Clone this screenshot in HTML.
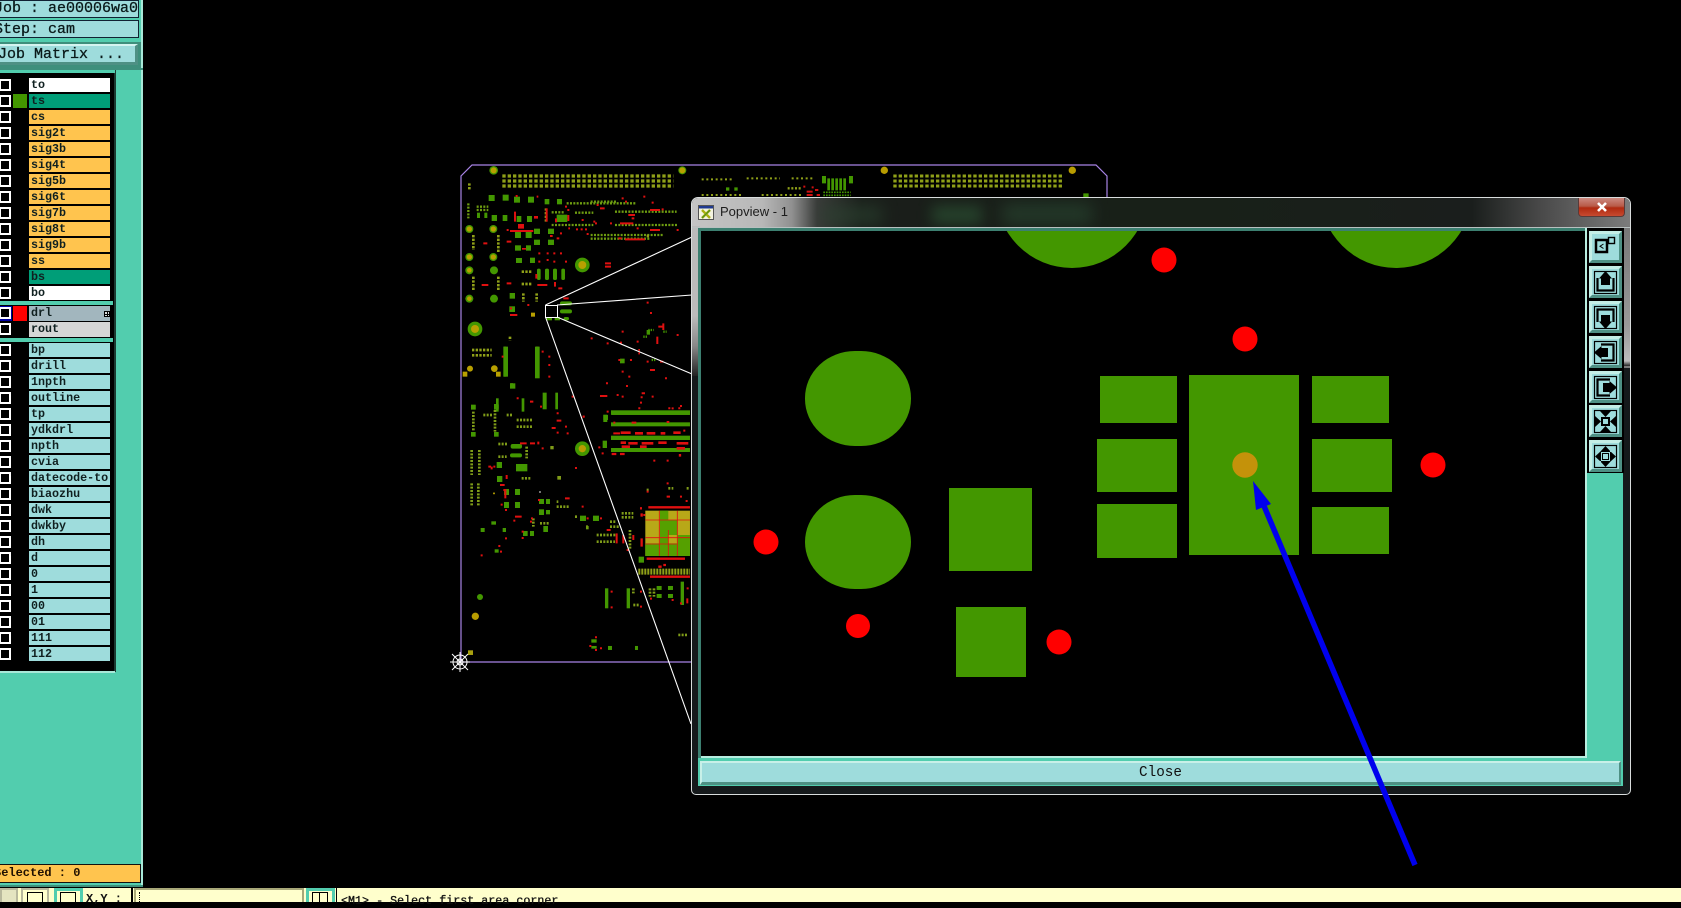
<!DOCTYPE html>
<html lang="en">
<head>
<meta charset="utf-8">
<title>Popview</title>
<style>
html,body{margin:0;padding:0;background:#000;}
body{position:relative;width:1681px;height:902px;overflow:hidden;font-family:"Liberation Mono",monospace;color:#0a1a1a;}
div,span,svg{position:absolute;box-sizing:border-box;}
.t{background:#9EDCDC;border:1px solid #123;left:-2px;width:141px;font-size:15px;line-height:16px;white-space:pre;-webkit-text-stroke:.3px #0a1a1a;}
.c{left:-1px;width:12px;height:12px;background:#000;border:2.5px solid #fff;}
.r{left:29px;width:81px;height:14px;font-size:11.7px;font-weight:bold;line-height:14px;padding-left:2px;white-space:pre;background:#9EDCDC;color:#102020;}
.w{background:#fff}.g{background:#009E78}.o{background:#FFC44E}
.b{left:1589px;width:33px;height:32px;}
</style>
</head>
<body>

<!-- PCB board -->
<svg style="left:0;top:0" width="1681" height="902" viewBox="0 0 1681 902" fill="none">
<path d="M461 662V176L472 165H1096L1107 176V200M461 662H691" stroke="#A884E6" stroke-width="1.2"/>
<g transform="translate(450 150) scale(.3333)">
 <path d="M157 78H670M157 93H670M157 108H670" stroke="#8FA018" stroke-width="10" stroke-dasharray="10 6"/>
 <path d="M350 160H560M422 155H500M375 188H430M305 187H345M305 225H430M375 225H430M495 225H685M422 255H640M422 266H600M495 185H680M55 160V205M80 170H115M80 180H115" stroke="#6D9C10" stroke-width="7" stroke-dasharray="6 4"/>
 <path d="M70 255V300M70 380V420M145 255V310M145 380V420M58 100V120M288 175V215M215 365H245M215 402H245M220 430V455M260 430V455M165 590V680M262 590V680M185 700V712M66 600H125M66 616H125M180 560V572M590 258H600" stroke="#8FA018" stroke-width="8" stroke-dasharray="7 4"/>
 <g fill="#439700">
  <rect x="116" y="135" width="18" height="18"/><rect x="158" y="134" width="18" height="18"/><rect x="192" y="140" width="18" height="18"/><rect x="234" y="140" width="18" height="18"/><rect x="284" y="147" width="14" height="16"/><rect x="321" y="147" width="15" height="16"/>
  <rect x="125" y="195" width="16" height="18"/><rect x="158" y="195" width="14" height="18"/><rect x="200" y="198" width="14" height="18"/><rect x="231" y="198" width="15" height="18"/><rect x="320" y="194" width="32" height="22"/>
  <rect x="195" y="246" width="18" height="18"/><rect x="227" y="246" width="18" height="18"/><rect x="252" y="236" width="18" height="16"/><rect x="294" y="236" width="18" height="16"/><rect x="252" y="269" width="18" height="16"/><rect x="294" y="269" width="18" height="16"/><rect x="195" y="286" width="18" height="16"/><rect x="228" y="286" width="15" height="16"/>
  <rect x="198" y="324" width="18" height="15"/><rect x="240" y="323" width="15" height="16"/><rect x="179" y="429" width="16" height="17"/><rect x="178" y="469" width="17" height="17"/><rect x="81" y="188" width="9" height="16"/><rect x="103" y="188" width="9" height="16"/>
  <rect x="261" y="356" width="11" height="34" rx="5"/><rect x="285" y="356" width="12" height="34" rx="5"/><rect x="309" y="356" width="12" height="34" rx="5"/><rect x="334" y="356" width="11" height="34" rx="5"/>
  <rect x="330" y="454" width="36" height="12" rx="6"/><rect x="330" y="478" width="36" height="12" rx="6"/><rect x="341" y="501" width="16" height="10" rx="5"/><rect x="290" y="501" width="16" height="10"/><rect x="314" y="501" width="16" height="10"/>
  <rect x="138" y="745" width="8" height="40"/><rect x="215" y="745" width="8" height="40"/><rect x="316" y="728" width="8" height="50"/><rect x="278" y="728" width="12" height="50"/>
  <rect x="160" y="590" width="14" height="90"/><rect x="255" y="590" width="14" height="95"/><rect x="460" y="795" width="14" height="15"/><rect x="484" y="782" width="236" height="13"/><rect x="180" y="700" width="16" height="16"/>
  <rect x="63" y="765" width="14" height="14"/><rect x="132" y="765" width="14" height="14"/><rect x="510" y="626" width="14" height="14"/><rect x="590" y="540" width="10" height="14"/>
  <circle cx="397" cy="345" r="22"/><circle cx="75" cy="537" r="22"/>
  <circle cx="131" cy="61" r="13"/><circle cx="697" cy="61" r="12"/>
  <circle cx="58" cy="237" r="12"/><circle cx="130" cy="237" r="12"/><circle cx="58" cy="321" r="12"/><circle cx="130" cy="321" r="12"/><circle cx="58" cy="361" r="12"/><circle cx="132" cy="361" r="12"/><circle cx="58" cy="446" r="12"/><circle cx="132" cy="446" r="12"/>
 </g>
 <g fill="#B8A000">
  <circle cx="131" cy="61" r="9"/><circle cx="697" cy="61" r="9"/><circle cx="397" cy="345" r="12"/><circle cx="75" cy="537" r="12"/>
  <circle cx="60" cy="656" r="9"/><circle cx="133" cy="656" r="10"/><circle cx="58" cy="237" r="8"/><circle cx="130" cy="237" r="8"/><circle cx="58" cy="321" r="8"/><circle cx="130" cy="321" r="8"/><circle cx="58" cy="361" r="7"/><circle cx="58" cy="446" r="7"/>
  <rect x="38" y="665" width="14" height="15"/><rect x="138" y="665" width="14" height="15"/><rect x="243" y="488" width="12" height="12"/>
 </g>
 <path fill="#E01010" d="M192 185h6v30h-6zM204 222h18v14h-18zM180 240h70v6h-70zM216 294h12v5h-12zM252 198h12v8h-12zM312 396h6v14h-6zM256 372h6v14h-6zM352 195h6v18h-6zM315 205h6v12h-6z"/>
 <path stroke="#E01010" stroke-width="6" d="M200 135v6M260 140h5M290 175v40M345 170h6M352 180h6M440 165h6M450 175h14M515 145h6M525 155h6M580 140h6M605 158h6M600 180h30M635 178h6M535 195h20M545 205h8M430 215h6M395 210h6M355 235h5M330 250h6M320 265h8M300 258h8M378 238h6M392 238h6M405 238h6M410 252h6M435 220h6M480 220h6M510 220h40M560 235h6M600 240h30M680 240h6M505 265h10M525 268h60M170 240h6M170 275h14M265 310h6M290 310h6M310 310h6M330 310h6M265 335h6M290 330h6M310 335h6M345 335h6M465 340h18M465 350h18M262 405h30M100 280h12M95 405h20M170 400h14M180 475h6M180 495h22M232 465h6M340 445h16M325 415h12M590 458h6M600 489h6M640 520v20M625 530h18M680 555h6M622 560v22M560 575h6M590 635h6M565 600h5M565 610h5M630 635h10M600 660h15M645 685h6M515 545h6M510 578h6M505 630h6M540 630h6M515 665h6M535 680h6M470 580h6M422 565h6M155 620h6M295 620h6M295 645h6M295 680h6M275 605h6M468 700h6M450 738h22M500 735h6M515 740h6M528 708h6M575 730h10M572 742h6M605 740h6M470 785h6M565 775h6M655 775h6M685 775h6M200 745h6M240 755h10M270 770h6M320 790h6M365 740h6M398 800h6"/>
 <path d="M580 560h14M605 630h14M595 540h16M640 545h10" stroke="#439700" stroke-width="7" stroke-dasharray="4 3"/>
</g>
<g transform="translate(450 400) scale(.3333)">
 <g fill="#439700">
  <rect x="483" y="31" width="237" height="13"/><rect x="483" y="67" width="237" height="12"/><rect x="483" y="107" width="237" height="13"/><rect x="483" y="144" width="237" height="12"/>
  <rect x="460" y="44" width="12" height="22"/><rect x="458" y="122" width="13" height="22"/>
  <rect x="63" y="14" width="14" height="14"/><rect x="132" y="12" width="14" height="14"/><rect x="63" y="96" width="14" height="14"/><rect x="132" y="96" width="14" height="14"/>
  <rect x="182" y="132" width="34" height="14" rx="6"/><rect x="180" y="160" width="36" height="12" rx="6"/><rect x="140" y="186" width="16" height="18"/><rect x="198" y="192" width="34" height="22"/><rect x="141" y="228" width="16" height="18"/>
  <rect x="162" y="267" width="15" height="18"/><rect x="195" y="267" width="15" height="18"/><rect x="162" y="306" width="15" height="18"/><rect x="195" y="306" width="15" height="18"/>
  <rect x="267" y="297" width="15" height="15"/><rect x="288" y="297" width="12" height="15"/><rect x="267" y="328" width="15" height="17"/><rect x="288" y="330" width="12" height="13"/>
  <rect x="390" y="347" width="18" height="16"/><rect x="429" y="347" width="18" height="16"/><rect x="219" y="393" width="14" height="15"/><rect x="240" y="393" width="12" height="15"/><rect x="280" y="378" width="14" height="18"/>
  <rect x="566" y="470" width="16" height="18"/><rect x="465" y="565" width="10" height="60"/><rect x="530" y="565" width="10" height="60"/><rect x="620" y="558" width="15" height="12"/><rect x="620" y="582" width="15" height="12"/><rect x="654" y="558" width="15" height="12"/><rect x="654" y="582" width="15" height="12"/><rect x="692" y="545" width="10" height="70"/>
  <rect x="424" y="718" width="16" height="10"/><rect x="424" y="738" width="16" height="8"/><rect x="474" y="738" width="12" height="12"/><rect x="555" y="738" width="9" height="12"/>
  <circle cx="397" cy="146" r="22"/><circle cx="90" cy="591" r="9"/><rect x="92" y="384" width="12" height="12"/><rect x="124" y="364" width="14" height="10"/><rect x="158" y="384" width="10" height="12"/><rect x="134" y="448" width="12" height="10"/>
 </g>
 <path d="M65 150V225M88 150V225M65 250V320M85 250V320M70 35V95M135 30V95M100 45H130M170 45H190M200 60H250M200 80H250M145 170H170M145 132H175M230 140V175M215 235H245M320 320H360M375 350H385M250 355V380M270 370H300M480 365H500M480 380H510M440 405H500M440 425H495M515 340H550M515 352H550M540 390V450M600 565V590M612 565V590M550 565V580M550 615H570M655 265H670M590 270H600M710 265H720M685 705H715M320 305h5M408 380h8" stroke="#7F9C18" stroke-width="8" stroke-dasharray="6 4"/>
 <path d="M565 515H720" stroke="#8FA018" stroke-width="18" stroke-dasharray="6 3"/>
 <!-- BGA -->
 <rect x="586" y="332" width="134" height="136" fill="#B8A818"/>
 <path fill="#55A000" d="M630 332h25v136h-25zM586 430h44v38h-44zM655 360h28v45h-28zM683 405h37v63h-37zM655 430h28v38h-28z"/>
 <path stroke="#E01010" stroke-width="2.5" d="M586 360H720M586 413H720M586 432H680M628 332V468M682 332V468M655 390V468"/>
 <path stroke="#E01010" stroke-width="7" d="M595 322H720M590 476H705M575 340v10M575 415v25M485 162h14M510 162h14M690 162v8M570 325h6M625 500h10M640 495h8M600 530h120"/>
 <path stroke="#E01010" stroke-width="8" d="M512 98h30M555 100h24M590 100h26M632 100h14M670 98h22M512 128h16M535 130h28M575 130h35M625 128h25M680 130h35M515 140h25M570 140h20M680 145h25"/>
 <path stroke="#E01010" stroke-width="6" d="M490 100h20M490 68h6M545 68h14M650 66h8M700 92h6M665 25h6M570 8h6M690 18h6M445 142h6M455 160h6M375 204h6M650 182h6M610 182h6M398 50h6M320 62h14M305 84h12M320 98h6M350 100h6M345 80h6M265 125v8M275 145h6M240 130h15M210 130h20M130 200h6M115 200h8M170 225v12M150 255h14M160 270h6V295M152 314h6M165 330h6M195 350h20M190 362h6M215 395h6M215 414h6M243 355h6M240 365h6M270 300h-6M345 295h14M395 320h6M410 355h6M450 355h6M470 390h12M500 400v30M520 405v25M530 450h6M550 405v15M580 345h6M650 250h6M650 290h10M590 275h6M690 290h6M710 300v6M482 575h6M482 622h6M570 575h6M570 620h6M600 596h6M665 600h6M710 565h6M712 595v15M690 610h6M418 738h6M450 745h6M435 750h6M435 712h6M165 415h6M145 438h6M150 455h6M92 466h6M125 200v8"/>
 <path fill="#A8A010" d="M54 751h15v14h-15z"/>
 <circle cx="76" cy="649" r="11" fill="#B89C00"/><circle cx="397" cy="146" r="11" fill="#B89C00"/><circle cx="132" cy="280" r="3" fill="#B8A000"/><circle cx="270" cy="276" r="3" fill="#999"/><rect x="408" y="378" width="8" height="10" fill="#6D9C10"/><rect x="301" y="138" width="10" height="10" fill="#7F9C18"/><rect x="322" y="228" width="11" height="11" fill="#7F9C18"/>
</g>
<g transform="translate(690 160) scale(.3333)">
 <path d="M35 58H128M170 55H270M305 55H370M35 105H155M215 105H340" stroke="#8FA018" stroke-width="6" stroke-dasharray="6 8"/>
 <path d="M610 48H1120M610 63H1120M610 78H1120" stroke="#8FA018" stroke-width="9" stroke-dasharray="10 6"/>
 <path fill="#439700" d="M396 48h12v22h-12zM412 55h8v36h-8zM424 55h8v36h-8zM436 55h8v36h-8zM448 55h8v36h-8zM460 55h8v36h-8zM477 48h12v22h-12zM108 82h10v10h-10zM133 82h10v10h-10zM1180 100h16v12h-16z"/>
 <path d="M400 97H482M400 106H482" stroke="#439700" stroke-width="5" stroke-dasharray="5 3"/>
 <path d="M350 95h18M350 105h18M375 90h10M380 105h10M340 80h6M365 82h6" stroke="#D01010" stroke-width="6"/>
 <path d="M293 85h40" stroke="#8FA018" stroke-width="7" stroke-dasharray="6 5"/>
 <circle cx="583" cy="31" r="11" fill="#B89C00"/><circle cx="1147" cy="31" r="11" fill="#B89C00"/>
</g>
<!-- zoom lines -->
<path stroke="#fff" stroke-width="1.1" d="M545.5 305L692 237M557 305L692 295M557 317L692 374M545.5 317L691 724"/>
<rect x="545.5" y="305.5" width="12" height="12" stroke="#fff"/>
<!-- origin mark -->
<g stroke="#fff" stroke-width="1" transform="translate(460 662)">
 <circle r="7"/><circle r="3"/>
 <path d="M-10 0H10M0-10V10M-8-8L8 8M-8 8L8-8"/>
</g>
</svg>

<!-- Left panel -->
<div style="left:0;top:0;width:143px;height:885px;background:#52CDAE;border-right:2px solid #A8E8D8"></div>
<div class="t" style="top:0;height:18px;text-indent:-5px;">Job : ae00006wa0</div>
<div class="t" style="top:20px;height:18px;text-indent:-5px;line-height:17px">Step: cam</div>
<div style="left:-2px;top:42px;width:143px;height:26px;background:#3E8F7C"></div>
<div style="left:-2px;top:44px;width:140px;height:21px;background:#9EDCDC;border-top:2px solid #D4F4F0;border-right:3px solid #4E9084;border-bottom:3px solid #4E9084;font-size:15px;line-height:17px;white-space:pre;text-indent:0;-webkit-text-stroke:.3px #0a1a1a">Job Matrix ...</div>
<div style="left:0;top:68px;width:143px;height:2px;background:#3E8F7C"></div>
<div style="left:0;top:73px;width:115px;height:598px;background:#000;border-right:1px solid #1c3a32"></div>
<div style="left:0;top:301px;width:113px;height:4px;background:#52CDAE"></div>
<div style="left:0;top:338px;width:113px;height:4px;background:#52CDAE"></div>
<div style="left:115px;top:70px;width:1px;height:602px;background:#1c3a32"></div>
<div style="left:0;top:671px;width:115px;height:2px;background:#A8E8D8"></div>

<!-- rows -->
<div class="c" style="top:79px"></div><div class="r w" style="top:78px">to</div>
<div class="c" style="top:95px"></div><div style="left:13px;top:94px;width:14px;height:14px;background:#439700"></div><div class="r g" style="top:94px">ts</div>
<div class="c" style="top:111px"></div><div class="r o" style="top:110px">cs</div>
<div class="c" style="top:127px"></div><div class="r o" style="top:126px">sig2t</div>
<div class="c" style="top:143px"></div><div class="r o" style="top:142px">sig3b</div>
<div class="c" style="top:159px"></div><div class="r o" style="top:158px">sig4t</div>
<div class="c" style="top:175px"></div><div class="r o" style="top:174px">sig5b</div>
<div class="c" style="top:191px"></div><div class="r o" style="top:190px">sig6t</div>
<div class="c" style="top:207px"></div><div class="r o" style="top:206px">sig7b</div>
<div class="c" style="top:223px"></div><div class="r o" style="top:222px">sig8t</div>
<div class="c" style="top:239px"></div><div class="r o" style="top:238px">sig9b</div>
<div class="c" style="top:255px"></div><div class="r o" style="top:254px">ss</div>
<div class="c" style="top:271px"></div><div class="r g" style="top:270px">bs</div>
<div class="c" style="top:287px"></div><div class="r w" style="top:286px">bo</div>

<div style="left:0;top:306px;width:12px;height:15px;background:#0000A0"></div>
<div class="c" style="top:307px"></div><div style="left:13px;top:306px;width:14px;height:15px;background:#F00"></div>
<div class="r" style="top:306px;height:15px;background:#A2B6BE">drl</div>
<div style="left:104px;top:311px;width:6px;height:6px;border:1px solid #000;background:linear-gradient(#000,#000) center/100% 1px no-repeat,linear-gradient(#000,#000) center/1px 100% no-repeat,#ddd"></div>
<div class="c" style="top:323px"></div><div class="r" style="top:322px;height:15px;background:#D6D6D6">rout</div>

<div class="c" style="top:344px"></div><div class="r" style="top:343px">bp</div>
<div class="c" style="top:360px"></div><div class="r" style="top:359px">drill</div>
<div class="c" style="top:376px"></div><div class="r" style="top:375px">1npth</div>
<div class="c" style="top:392px"></div><div class="r" style="top:391px">outline</div>
<div class="c" style="top:408px"></div><div class="r" style="top:407px">tp</div>
<div class="c" style="top:424px"></div><div class="r" style="top:423px">ydkdrl</div>
<div class="c" style="top:440px"></div><div class="r" style="top:439px">npth</div>
<div class="c" style="top:456px"></div><div class="r" style="top:455px">cvia</div>
<div class="c" style="top:472px"></div><div class="r" style="top:471px">datecode-to</div>
<div class="c" style="top:488px"></div><div class="r" style="top:487px">biaozhu</div>
<div class="c" style="top:504px"></div><div class="r" style="top:503px">dwk</div>
<div class="c" style="top:520px"></div><div class="r" style="top:519px">dwkby</div>
<div class="c" style="top:536px"></div><div class="r" style="top:535px">dh</div>
<div class="c" style="top:552px"></div><div class="r" style="top:551px">d</div>
<div class="c" style="top:568px"></div><div class="r" style="top:567px">0</div>
<div class="c" style="top:584px"></div><div class="r" style="top:583px">1</div>
<div class="c" style="top:600px"></div><div class="r" style="top:599px">00</div>
<div class="c" style="top:616px"></div><div class="r" style="top:615px">01</div>
<div class="c" style="top:632px"></div><div class="r" style="top:631px">111</div>
<div class="c" style="top:648px"></div><div class="r" style="top:647px">112</div>

<div style="left:-2px;top:864px;width:143px;height:19px;background:#FFC44E;border:1px solid #111;font-size:12px;font-weight:bold;line-height:17px;white-space:pre;text-indent:-5px;color:#201000">Selected : 0</div>

<!-- bottom bar -->
<div style="left:0;top:885px;width:143px;height:2px;background:#3E8F7C"></div>
<div style="left:0;top:888px;width:1681px;height:14px;background:#FFFFCC"></div>
<div style="left:0;top:888px;width:18px;height:14px;background:#E4E4C0;border:2px solid #B8B89C;border-bottom:0"></div>
<div style="left:21px;top:888px;width:28px;height:14px;background:#FFFFCC;border:2px solid #B8B89C;border-bottom:0"></div>
<div style="left:27px;top:892px;width:16px;height:10px;border:1px solid #000;border-bottom:0"></div>
<div style="left:54px;top:888px;width:29px;height:14px;background:#FFFFCC;border:3px solid #52CDAE;border-bottom:0"></div>
<div style="left:60px;top:892px;width:16px;height:10px;border:1px solid #000;border-bottom:0"></div>
<div style="left:86px;top:892px;font-size:12px;font-weight:bold;line-height:14px;white-space:pre;color:#111">X,Y :</div>
<div style="left:131px;top:888px;width:2px;height:14px;background:#000"></div>
<div style="left:134px;top:888px;width:170px;height:14px;background:#FFFFCC;border:2px solid #A8A878;border-bottom:0"></div>
<div style="left:139px;top:892px;width:1px;height:10px;border-left:1px dotted #000"></div>
<div style="left:306px;top:888px;width:29px;height:14px;background:#FFFFCC;border:3px solid #52CDAE;border-bottom:0"></div>
<div style="left:312px;top:892px;width:16px;height:10px;border:1px solid #000;border-bottom:0"></div>
<div style="left:319px;top:892px;width:1px;height:10px;background:#000"></div>
<div style="left:336px;top:888px;width:1px;height:14px;background:#000"></div>
<div style="left:341px;top:894px;font-size:11.7px;line-height:14px;white-space:pre;color:#111;-webkit-text-stroke:.3px #111">&lt;M1&gt; - Select first area corner</div>

<!-- Popview window frame -->
<div style="left:691px;top:197px;width:940px;height:598px;background:#15191b;border:1px solid #d8dcdc;border-radius:7px 7px 5px 5px;overflow:hidden">
  <div style="left:0;top:0;width:938px;height:170px;background:linear-gradient(90deg,#c4c4c4 0,#b8b8b8 70px,#909090 100px,#3a3c3a 125px,#1a1e1a 170px,#182018 500px,#1a1e1c 780px,#4a4a4a 850px,#7c7c7c 938px)"></div>
  <div style="left:8px;top:29px;width:922px;height:150px;background:#000"></div>
  <div style="left:0;top:28px;width:8px;height:150px;background:linear-gradient(#bbb 0,#bbb 90px,#888 120px,#222 150px)"></div>
  <div style="left:930px;top:28px;width:8px;height:140px;background:linear-gradient(#777 0,#999 100px,#bbb 135px,#222 140px)"></div>
  <div style="left:130px;top:8px;width:60px;height:18px;background:#2c4632;filter:blur(8px);opacity:.6"></div>
  <div style="left:240px;top:8px;width:50px;height:18px;background:#2e5a38;filter:blur(7px);opacity:.6"></div>
  <div style="left:310px;top:6px;width:90px;height:20px;background:#2a4a34;filter:blur(8px);opacity:.6"></div>
</div>
<div style="left:692px;top:227px;width:938px;height:1px;background:#b8c0c0"></div>
<svg style="left:698px;top:205px" width="16" height="15" viewBox="0 0 16 15">
 <rect x=".5" y=".5" width="15" height="14" fill="#F4F4E0" stroke="#555"/>
 <rect x="1" y="1" width="14" height="2.5" fill="#203A90"/>
 <path d="M4 5L12 13M12 5L4 13" stroke="#A8B010" stroke-width="2.4"/>
 <path d="M4 13L12 5" stroke="#50901A" stroke-width="1.2"/>
</svg>
<div style="left:720px;top:203px;font-family:'Liberation Sans',sans-serif;font-size:13px;line-height:17px;color:#1c1c1c;white-space:pre">Popview - 1</div>
<!-- close X -->
<div style="left:1578px;top:198px;width:47px;height:19px;background:linear-gradient(#cc8a80 0,#b85a48 45%,#b02a10 55%,#c84a30 100%);border:1px solid #5a3a38;border-top:0;border-radius:0 0 4px 4px"></div>
<svg style="left:1596px;top:202px" width="12" height="10" viewBox="0 0 12 10"><path d="M2 1L10 9M10 1L2 9" stroke="#fff" stroke-width="2.6"/></svg>

<!-- Client area -->
<div style="left:698px;top:228px;width:925px;height:558px;background:#52CDAE"></div>
<div style="left:698px;top:228px;width:887px;height:3px;background:#3C7F70"></div>
<div style="left:698px;top:228px;width:3px;height:530px;background:#3C7F70"></div>
<div style="left:701px;top:756px;width:884px;height:2px;background:#B8EEE0"></div>
<div style="left:1585px;top:228px;width:2px;height:530px;background:#B8EEE0"></div>
<div style="left:1587px;top:228px;width:37px;height:245px;background:#000"></div>

<!-- Canvas -->
<svg style="left:701px;top:231px" width="884" height="525" viewBox="701 231 884 525">
 <rect x="701" y="231" width="884" height="525" fill="#000"/>
 <g fill="#439700">
  <circle cx="1072" cy="192" r="76"/><circle cx="1396" cy="192" r="76"/>
  <rect x="805" y="351" width="106" height="95" rx="50" ry="47"/>
  <rect x="805" y="495" width="106" height="94" rx="50" ry="47"/>
  <rect x="949" y="488" width="83" height="83"/>
  <rect x="956" y="607" width="70" height="70"/>
  <rect x="1100" y="376" width="77" height="47"/>
  <rect x="1189" y="375" width="110" height="180"/>
  <rect x="1312" y="376" width="77" height="47"/>
  <rect x="1097" y="439" width="80" height="53"/>
  <rect x="1312" y="439" width="80" height="53"/>
  <rect x="1097" y="504" width="80" height="54"/>
  <rect x="1312" y="507" width="77" height="47"/>
 </g>
 <g fill="#F00">
  <circle cx="1164" cy="260" r="12.5"/><circle cx="1245" cy="339" r="12.5"/><circle cx="1433" cy="465" r="12.5"/>
  <circle cx="766" cy="542" r="12.5"/><circle cx="858" cy="626" r="12"/><circle cx="1059" cy="642" r="12.5"/>
 </g>
 <circle cx="1245" cy="465" r="12.7" fill="#C4920A"/>
</svg>

<!-- Toolbar buttons -->
<svg class="b" style="top:231px" viewBox="0 0 33 32"><rect width="33" height="32" fill="#9EDCDC"/><path d="M0 0H33L30 3H3V29L0 32Z" fill="#C4EEE6"/><path d="M33 0V32H0L3 29H30V3Z" fill="#4E9084"/>
 <rect x="7" y="9" width="11" height="12" fill="none" stroke="#000" stroke-width="2.5"/><rect x="19.5" y="6.5" width="6" height="6" fill="none" stroke="#000" stroke-width="1.4"/><path d="M14.5 13L11 15.2L14.5 17.5" stroke="#000" fill="none"/></svg>
<svg class="b" style="top:266px" viewBox="0 0 33 32"><rect width="33" height="32" fill="#9EDCDC"/><path d="M0 0H33L30 3H3V29L0 32Z" fill="#C4EEE6"/><path d="M33 0V32H0L3 29H30V3Z" fill="#4E9084"/>
 <rect x="5.5" y="5.5" width="22" height="22" fill="none" stroke="#000" stroke-width="1.2"/><path d="M8.5 12V24.5H24.5V12" fill="none" stroke="#000" stroke-width="2.2"/><path d="M16.5 5L23 12.5H21V19H12V12.5H10Z" fill="#000"/></svg>
<svg class="b" style="top:301px" viewBox="0 0 33 32"><rect width="33" height="32" fill="#9EDCDC"/><path d="M0 0H33L30 3H3V29L0 32Z" fill="#C4EEE6"/><path d="M33 0V32H0L3 29H30V3Z" fill="#4E9084"/>
 <g transform="rotate(180 16.5 16.5)"><rect x="5.5" y="5.5" width="22" height="22" fill="none" stroke="#000" stroke-width="1.2"/><path d="M8.5 12V24.5H24.5V12" fill="none" stroke="#000" stroke-width="2.2"/><path d="M16.5 5L23 12.5H21V19H12V12.5H10Z" fill="#000"/></g></svg>
<svg class="b" style="top:336px" viewBox="0 0 33 32"><rect width="33" height="32" fill="#9EDCDC"/><path d="M0 0H33L30 3H3V29L0 32Z" fill="#C4EEE6"/><path d="M33 0V32H0L3 29H30V3Z" fill="#4E9084"/>
 <g transform="rotate(-90 16.5 16.5)"><rect x="5.5" y="5.5" width="22" height="22" fill="none" stroke="#000" stroke-width="1.2"/><path d="M8.5 12V24.5H24.5V12" fill="none" stroke="#000" stroke-width="2.2"/><path d="M16.5 5L23 12.5H21V19H12V12.5H10Z" fill="#000"/></g></svg>
<svg class="b" style="top:371px" viewBox="0 0 33 32"><rect width="33" height="32" fill="#9EDCDC"/><path d="M0 0H33L30 3H3V29L0 32Z" fill="#C4EEE6"/><path d="M33 0V32H0L3 29H30V3Z" fill="#4E9084"/>
 <g transform="rotate(90 16.5 16.5)"><rect x="5.5" y="5.5" width="22" height="22" fill="none" stroke="#000" stroke-width="1.2"/><path d="M8.5 12V24.5H24.5V12" fill="none" stroke="#000" stroke-width="2.2"/><path d="M16.5 5L23 12.5H21V19H12V12.5H10Z" fill="#000"/></g></svg>
<svg class="b" style="top:405px" viewBox="0 0 33 32"><rect width="33" height="32" fill="#9EDCDC"/><path d="M0 0H33L30 3H3V29L0 32Z" fill="#C4EEE6"/><path d="M33 0V32H0L3 29H30V3Z" fill="#4E9084"/>
 <rect x="5.5" y="5.5" width="22" height="22" fill="none" stroke="#000" stroke-width="1.2"/><rect x="13" y="13" width="7" height="7" fill="none" stroke="#000" stroke-width="2"/><path d="M16.5 12L11 6H22ZM16.5 21L11 27H22ZM12 16.5L6 11V22ZM21 16.5L27 11V22Z" fill="#000"/></svg>
<svg class="b" style="top:440px" viewBox="0 0 33 32"><rect width="33" height="32" fill="#9EDCDC"/><path d="M0 0H33L30 3H3V29L0 32Z" fill="#C4EEE6"/><path d="M33 0V32H0L3 29H30V3Z" fill="#4E9084"/>
 <rect x="5.5" y="5.5" width="22" height="22" fill="none" stroke="#000" stroke-width="1.2"/><rect x="13.5" y="13.5" width="6" height="6" fill="none" stroke="#000"/><path d="M16.5 6L22 12H11ZM16.5 27L22 21H11ZM6 16.5L12 11V22ZM27 16.5L21 11V22Z" fill="#000"/></svg>

<!-- Close button -->
<div style="left:700px;top:761px;width:921px;height:24px;background:#9EDCDC;border-top:2px solid #C8F0E8;border-left:2px solid #C8F0E8;border-right:2px solid #4E9084;border-bottom:3px solid #4E9084;font-size:14.3px;line-height:20px;text-align:center;color:#111">Close</div>

<!-- Blue arrow annotation -->
<svg style="left:0;top:0" width="1681" height="902" viewBox="0 0 1681 902">
 <path d="M1264 506L1415 865" stroke="#0000EE" stroke-width="5.5"/>
 <path d="M1253 481L1271 504L1256 510Z" fill="#0000EE"/>
</svg>
</body>
</html>
